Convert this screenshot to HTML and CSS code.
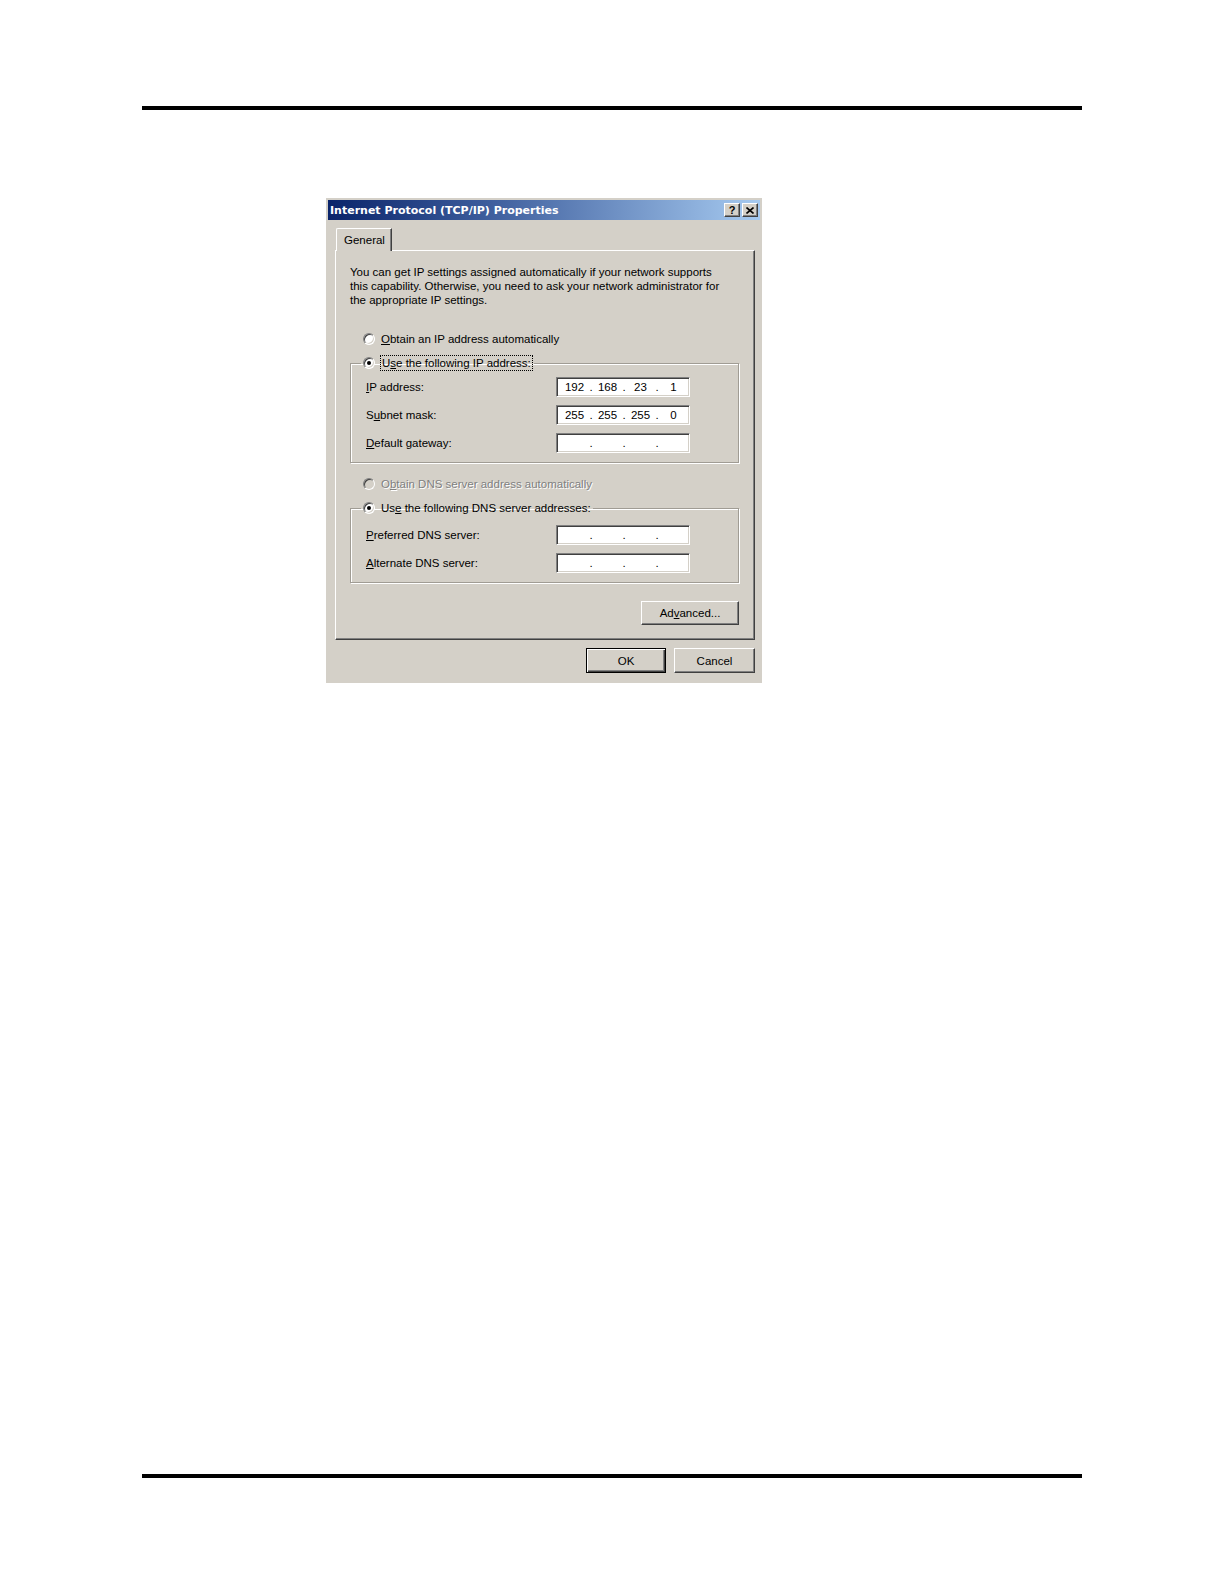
FILE: index.html
```html
<!DOCTYPE html>
<html>
<head>
<meta charset="utf-8">
<title>Internet Protocol (TCP/IP) Properties</title>
<link rel="stylesheet" href="styles.css">
</head>
<body>
<div class="page">
  <div class="rule"></div>
  <div class="figure">
    <div class="dialog">
      <div class="titlebar">
        <span class="title">Internet Protocol (TCP/IP) Properties</span>
        <div class="caption-btns">
          <span class="cap-btn help">?</span>
          <span class="cap-btn close"><svg width="8" height="7" viewBox="0 0 8 7"><path d="M0.5 0.5 L7.5 6.5 M7.5 0.5 L0.5 6.5" stroke="#000" stroke-width="1.6" fill="none"/></svg></span>
        </div>
      </div>
      <div class="dlg-body">
        <div class="tabs"><span class="tab">General</span></div>
        <div class="panel">
          <p class="intro">You can get IP settings assigned automatically if your network supports<br>this capability. Otherwise, you need to ask your network administrator for<br>the appropriate IP settings.</p>
          <div class="opt first"><span class="radio"></span><span class="opt-text"><u>O</u>btain an IP address automatically</span></div>
          <fieldset class="group">
            <legend class="group-title"><span class="radio checked"></span><span class="opt-text focus">U<u>s</u>e the following IP address:</span></legend>
            <div class="rows">
              <span class="lbl"><u>I</u>P address:</span>
              <span class="ipbox"><span class="oct">192</span><span class="dot">.</span><span class="oct">168</span><span class="dot">.</span><span class="oct">23</span><span class="dot">.</span><span class="oct">1</span></span>
              <span class="lbl">S<u>u</u>bnet mask:</span>
              <span class="ipbox"><span class="oct">255</span><span class="dot">.</span><span class="oct">255</span><span class="dot">.</span><span class="oct">255</span><span class="dot">.</span><span class="oct">0</span></span>
              <span class="lbl"><u>D</u>efault gateway:</span>
              <span class="ipbox"><span class="oct"></span><span class="dot">.</span><span class="oct"></span><span class="dot">.</span><span class="oct"></span><span class="dot">.</span><span class="oct"></span></span>
            </div>
          </fieldset>
          <div class="opt second disabled"><span class="radio"></span><span class="opt-text">O<u>b</u>tain DNS server address automatically</span></div>
          <fieldset class="group dns">
            <legend class="group-title"><span class="radio checked"></span><span class="opt-text">Us<u>e</u> the following DNS server addresses:</span></legend>
            <div class="rows">
              <span class="lbl"><u>P</u>referred DNS server:</span>
              <span class="ipbox"><span class="oct"></span><span class="dot">.</span><span class="oct"></span><span class="dot">.</span><span class="oct"></span><span class="dot">.</span><span class="oct"></span></span>
              <span class="lbl"><u>A</u>lternate DNS server:</span>
              <span class="ipbox"><span class="oct"></span><span class="dot">.</span><span class="oct"></span><span class="dot">.</span><span class="oct"></span><span class="dot">.</span><span class="oct"></span></span>
            </div>
          </fieldset>
          <div class="adv-row"><span class="btn adv">Ad<u>v</u>anced...</span></div>
        </div>
        <div class="footer">
          <span class="btn default ok">OK</span>
          <span class="btn cancel">Cancel</span>
        </div>
      </div>
    </div>
  </div>
  <div class="rule bottom"></div>
</div>
</body>
</html>
```

FILE: styles.css
```css
html, body {
  margin: 0;
  padding: 0;
  background: #ffffff;
}

.page {
  padding: 106px 0 0 142px;
  width: 940px;
}

.rule {
  height: 4px;
  background: #000000;
}

.rule.bottom {
  margin-top: 791px;
}

.figure {
  margin-top: 88px;
  padding-left: 184px;
}

.dialog {
  width: 436px;
  height: 485px;
  box-sizing: border-box;
  padding: 2px;
  background: #d4d0c8;
  display: flex;
  flex-direction: column;
  font-family: "Liberation Sans", Arial, sans-serif;
  font-size: 11.5px;
  line-height: 14px;
  color: #000000;
}

.titlebar {
  height: 20px;
  flex: none;
  display: flex;
  align-items: center;
  justify-content: space-between;
  padding: 0 2px 0 2px;
  background: linear-gradient(to right, #0a246a 0%, #3a5a9a 35%, #a6caf0 100%);
}

.title {
  color: #ffffff;
  font-family: "DejaVu Sans", Verdana, sans-serif;
  font-weight: bold;
  font-size: 11px;
  letter-spacing: 0;
  padding-top: 1px;
}

.caption-btns {
  display: flex;
  gap: 2px;
}

.cap-btn {
  width: 16px;
  height: 14px;
  box-sizing: border-box;
  display: flex;
  align-items: center;
  justify-content: center;
  background: #d4d0c8;
  border: 1px solid;
  border-color: #ffffff #404040 #404040 #ffffff;
  box-shadow: inset -1px -1px 0 #808080;
  font-weight: bold;
  font-size: 11px;
  line-height: 12px;
  color: #000000;
}

.dlg-body {
  flex: 1;
  display: flex;
  flex-direction: column;
  padding: 8px 5px 0 7px;
}

.tabs {
  display: flex;
  padding-left: 1px;
}

.tab {
  position: relative;
  z-index: 1;
  height: 23px;
  box-sizing: border-box;
  margin-bottom: -1px;
  padding: 4px 6px 0 7px;
  background: #d4d0c8;
  border-top: 1px solid #ffffff;
  border-left: 1px solid #ffffff;
  border-right: 1px solid #404040;
  border-top-left-radius: 2px;
  box-shadow: inset -1px 0 0 #808080;
}

.panel {
  height: 390px;
  box-sizing: border-box;
  border: 1px solid;
  border-color: #ffffff #404040 #404040 #ffffff;
  box-shadow: inset -1px -1px 0 #808080;
  padding: 14px 15px 0 14px;
  display: flex;
  flex-direction: column;
}

.intro {
  margin: 0;
  white-space: nowrap;
}

.opt {
  display: flex;
  align-items: center;
  height: 14px;
  padding-left: 13px;
}

.opt.first {
  margin-top: 25px;
}

.opt.second {
  margin-top: 14px;
}

.radio {
  width: 12px;
  height: 12px;
  flex: none;
  box-sizing: border-box;
  border-radius: 50%;
  border: 1px solid;
  border-color: #808080 #ffffff #ffffff #808080;
  background: #ffffff;
  box-shadow: inset 1px 1px 0 #404040, inset -1px -1px 0 #d4d0c8;
  display: inline-flex;
  align-items: center;
  justify-content: center;
  margin-right: 6px;
}

.radio.checked::after {
  content: "";
  width: 4px;
  height: 4px;
  border-radius: 50%;
  background: #000000;
}

.disabled {
  color: #808080;
  text-shadow: 1px 1px 0 #ffffff;
}

.disabled .radio {
  background: #d4d0c8;
}

.focus {
  outline: 1px dotted #000000;
  outline-offset: 0;
  padding: 0 1px;
}

.group {
  margin: 10px 0 0 0;
  padding: 7px 0 9px 15px;
  border: 1px solid #a09c94;
  box-shadow: inset 1px 1px 0 #ffffff, 1px 1px 0 #ffffff;
  min-width: 0;
}

.group.dns {
  padding-top: 10px;
  padding-bottom: 9px;
}

.group-title {
  display: flex;
  align-items: center;
  height: 14px;
  margin-left: -5px;
  padding: 0 2px;
}

.rows {
  display: grid;
  grid-template-columns: 190px 134px;
  row-gap: 8px;
  align-items: center;
}

.lbl {
  line-height: 20px;
}

.ipbox {
  height: 20px;
  box-sizing: border-box;
  display: flex;
  align-items: center;
  padding-left: 3px;
  background: #ffffff;
  border: 1px solid;
  border-color: #808080 #ffffff #ffffff #808080;
  box-shadow: inset 1px 1px 0 #404040, inset -1px -1px 0 #d4d0c8;
}

.oct {
  width: 29px;
  text-align: center;
}

.dot {
  width: 4px;
  text-align: center;
}

.adv-row {
  display: flex;
  justify-content: flex-end;
  margin-top: 18px;
}

.btn {
  height: 24px;
  box-sizing: border-box;
  display: flex;
  align-items: center;
  justify-content: center;
  background: #d4d0c8;
  border: 1px solid;
  border-color: #ffffff #404040 #404040 #ffffff;
  box-shadow: inset -1px -1px 0 #808080;
}

.btn.adv {
  width: 98px;
}

.footer {
  display: flex;
  justify-content: flex-end;
  gap: 8px;
  margin-top: 8px;
}

.footer .btn {
  height: 25px;
}

.btn.ok {
  width: 80px;
}

.btn.cancel {
  width: 81px;
}

.btn.default {
  border: 1px solid #000000;
  box-shadow: inset 1px 1px 0 #ffffff, inset -1px -1px 0 #404040, inset -2px -2px 0 #808080;
}
```
